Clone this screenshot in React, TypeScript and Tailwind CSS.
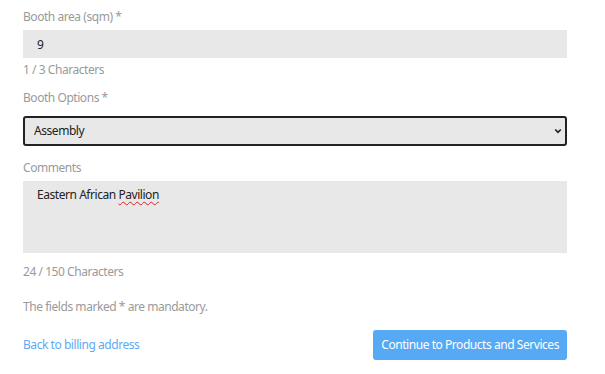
import { useState } from 'react';

const text = 'text-[12px] tracking-[-0.45px]';

function Label({ children, className = 'mb-[4px]' }: { children: React.ReactNode; className?: string }) {
  return <label className={`block ${text} leading-[18px] text-[#9a9a9a] ${className}`}>{children}</label>;
}

function Counter({ children, className }: { children: React.ReactNode; className: string }) {
  return <p className={`${text} leading-[18px] text-[#9a9a9a] ${className}`}>{children}</p>;
}

export default function App() {
  const [area, setArea] = useState('9');
  const [option, setOption] = useState('Assembly');

  return (
    <div className="w-[605px] h-[374px] bg-white px-[23px] pt-[8px] font-['Noto_Sans',sans-serif] overflow-hidden">
      <div className="w-[544px]">
        {/* Booth area */}
        <Label>Booth area (sqm) *</Label>
        <input
          value={area}
          onChange={(e) => setArea(e.target.value)}
          className={`block w-full h-[28px] bg-[#e8e8e8] px-[14px] ${text} text-[#222] outline-none`}
        />
        <Counter className="mt-[3px]">1 / 3 Characters</Counter>

        {/* Booth options */}
        <div className="mt-[10px]">
          <Label className="mb-[9px]">Booth Options *</Label>
          <div className="relative">
            <select
              value={option}
              onChange={(e) => setOption(e.target.value)}
              className={`block w-full h-[30px] appearance-none bg-[#e8e8e8] border-2 border-[#222] rounded-[3px] px-[9px] ${text} text-[#222] outline-none`}
            >
              <option>Assembly</option>
              <option>Space only</option>
            </select>
            <svg className="absolute right-[5px] top-[12px] pointer-events-none" width="8" height="6" viewBox="0 0 8 6">
              <path d="M1.2 1.5 L4 4.3 L6.8 1.5" fill="none" stroke="#222" strokeWidth="1.7" />
            </svg>
          </div>
        </div>

        {/* Comments */}
        <div className="mt-[13px]">
          <Label>Comments</Label>
          <div
            contentEditable
            suppressContentEditableWarning
            className={`w-full h-[72px] bg-[#e8e8e8] px-[14px] py-[6px] ${text} leading-[16px] text-[#222] outline-none`}
          >
            Eastern African{' '}
            <span className="underline decoration-wavy decoration-[#e02020] decoration-1 underline-offset-2">Pavilion</span>
          </div>
          <Counter className="mt-[10px]">24 / 150 Characters</Counter>
        </div>

        <Counter className="mt-[17px]">The fields marked * are mandatory.</Counter>

        <div className="flex items-center justify-between mt-[14px]">
          <a href="#" className={`${text} text-[#5fa9f2]`}>Back to billing address</a>
          <button className={`h-[30px] px-[8px] bg-[#55a9f5] rounded-[3px] ${text} text-white`}>
            Continue to Products and Services
          </button>
        </div>
      </div>
    </div>
  );
}
